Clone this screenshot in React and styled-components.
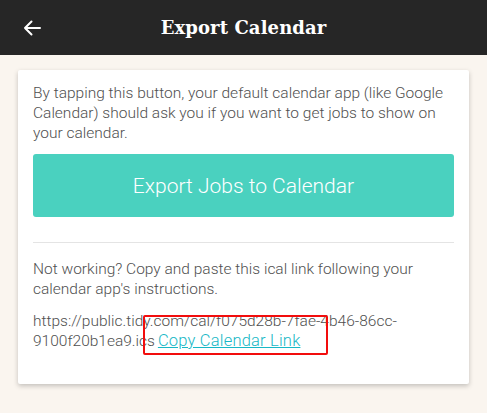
import React from 'react'
import styled, { createGlobalStyle } from 'styled-components'

const GlobalStyle = createGlobalStyle`
    html, body {
        margin: 0;
        padding: 0;
        background: #faf5ef;
    }
`

const Page = styled.div`
    width: 487px;
    min-height: 413px;
    background: #faf5ef;
    font-family: Roboto, 'Liberation Sans', sans-serif;
`

const Header = styled.header`
    height: 55px;
    background: #262626;
    display: flex;
    align-items: center;
    position: relative;
    justify-content: center;
`

const BackButton = styled.button`
    position: absolute;
    left: 20px;
    top: 16px;
    background: none;
    border: none;
    padding: 0;
    width: 24px;
    height: 24px;
    display: flex;
    align-items: center;
    justify-content: center;
    cursor: pointer;
`

const Title = styled.h1`
    margin: 0;
    color: #fff;
    font-family: 'DejaVu Serif', 'Liberation Serif', serif;
    font-weight: bold;
    font-size: 18px;
    letter-spacing: 0.1px;
`

const Content = styled.main`
    padding: 15px 18px 30px;
`

const Card = styled.section`
    position: relative;
    background: #fff;
    box-shadow: 0 2px 5px rgba(0, 0, 0, 0.22);
    border-radius: 2px;
    padding: 13px 15px 33px;
`

const Text = styled.p`
    margin: 0;
    color: #505050;
    font-weight: 300;
    font-size: 15.5px;
    line-height: 20px;
`

const ExportButton = styled.button`
    display: block;
    width: 100%;
    height: 63px;
    margin-top: 11px;
    background: #4ad1bf;
    border: none;
    border-radius: 3px;
    color: #fff;
    font-family: Roboto, 'Liberation Sans', sans-serif;
    font-weight: 300;
    font-size: 21px;
    cursor: pointer;
`

const Divider = styled.hr`
    border: none;
    border-top: 1px solid #e4e4e4;
    margin: 25px 0 16px;
`

const LinkText = styled(Text)`
    margin-top: 12px;
`

const CopyLink = styled.a`
    color: #17b8c6;
    text-decoration: underline;
    font-weight: 300;
    font-size: 16.5px;
    letter-spacing: 0.2px;
    margin-left: 3px;
    cursor: pointer;
`

const Highlight = styled.div`
    position: absolute;
    left: 125px;
    top: 245px;
    width: 181px;
    height: 36px;
    border: 2px solid #f20d0d;
    border-radius: 2px;
    pointer-events: none;
`

export default function App() {
    return (
        <Page>
            <GlobalStyle />
            <Header>
                <BackButton aria-label="Back">
                    <svg width="20" height="18" viewBox="0 0 20 18" fill="none">
                        <path
                            d="M18 9H3M9.5 2.5L3 9l6.5 6.5"
                            stroke="#fff"
                            strokeWidth="2"
                            strokeLinecap="round"
                            strokeLinejoin="round"
                        />
                    </svg>
                </BackButton>
                <Title>Export Calendar</Title>
            </Header>
            <Content>
                <Card>
                    <Text>
                        By tapping this button, your default calendar app (like Google
                        Calendar) should ask you if you want to get jobs to show on your
                        calendar.
                    </Text>
                    <ExportButton>Export Jobs to Calendar</ExportButton>
                    <Divider />
                    <Text>
                        Not working? Copy and paste this ical link following your calendar
                        app's instructions.
                    </Text>
                    <LinkText>
                        https://public.tidy.com/cal/f075d28b-7fae-4b46-86cc-9100f20b1ea9.ics
                        <CopyLink>Copy Calendar Link</CopyLink>
                    </LinkText>
                    <Highlight />
                </Card>
            </Content>
        </Page>
    )
}
